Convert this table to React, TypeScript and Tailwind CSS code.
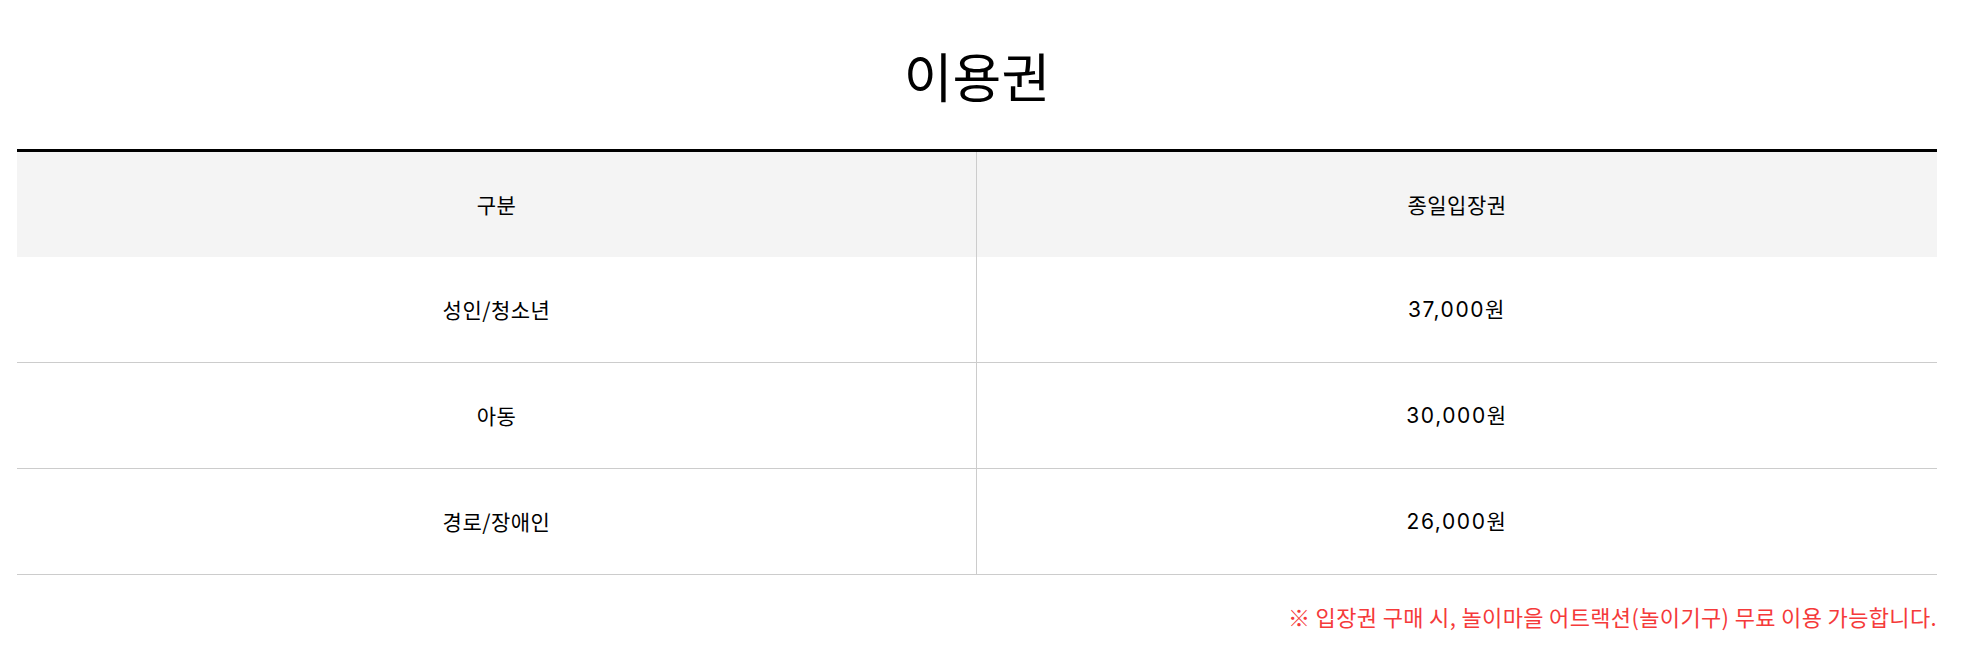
const rows = [
    { name: "성인/청소년", price: "37,000원" },
    { name: "아동", price: "30,000원" },
    { name: "경로/장애인", price: "26,000원" },
];

export default function App() {
    return (
        <div className="min-h-screen bg-white text-black font-['Noto_Sans_CJK_KR',sans-serif]">
            <div className="ml-[17px] w-[1920px]">
                <h1 className="h-[149px] pt-[2px] flex items-center justify-center text-[53px] font-normal text-black">
                    이용권
                </h1>
                <div className="border-t-[3px] border-black">
                    <div className="grid grid-cols-2 h-[105px] bg-[#f4f4f4] text-[21px] tracking-[0.5px]">
                        <div className="flex items-center justify-center border-r border-[#cccccc]">구분</div>
                        <div className="flex items-center justify-center">종일입장권</div>
                    </div>
                    {rows.map((row) => (
                        <div key={row.name} className="grid grid-cols-2 h-[106px] border-b border-[#cccccc] text-[21px] tracking-[0.5px]">
                            <div className="flex items-center justify-center border-r border-[#cccccc]">{row.name}</div>
                            <div className="flex items-center justify-center font-['Inter','Noto_Sans_CJK_KR',sans-serif] tracking-[1.6px]">
                                {row.price}
                            </div>
                        </div>
                    ))}
                </div>
                <p className="mt-[26px] text-right text-[22px] leading-[30px] tracking-[0.35px] text-[#f53a3a]">
                    ※ 입장권 구매 시, 놀이마을 어트랙션(놀이기구) 무료 이용 가능합니다.
                </p>
            </div>
        </div>
    );
}
